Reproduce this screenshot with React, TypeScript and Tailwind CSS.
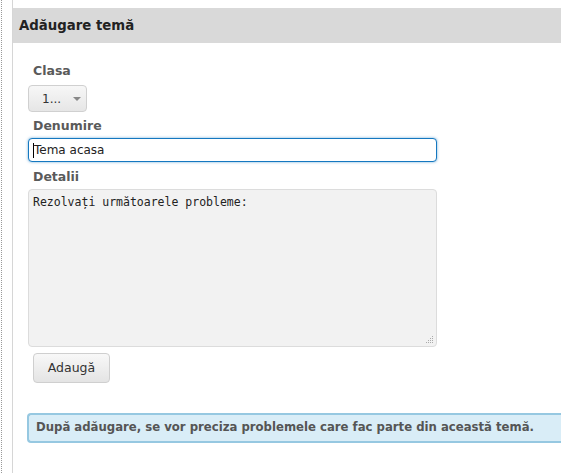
import React from "react";

export default function App() {
  return (
    <div
      className="w-[561px] h-[473px] bg-white flex overflow-hidden"
      style={{ fontFamily: '"DejaVu Sans", Verdana, sans-serif' }}
    >
      <div className="w-[3px] h-full border-l border-dotted border-[#999] ml-[1px]" />
      <div className="w-[8px]" />
      <div className="flex-1 border-l border-[#d6d6d6] min-w-0">
        <div className="mt-[8px] h-[35px] bg-[#d9d9d9] flex items-center pl-[6px] w-[600px]">
          <span className="text-[13.3px] font-bold text-[#222]">Adăugare temă</span>
        </div>
        <div className="pl-[15px] pt-[20px] flex flex-col">
          <label className="text-[12.5px] font-bold text-[#5a5a5a] pl-[5px] leading-[16px]">Clasa</label>
          <div className="mt-[6px] w-[59px] h-[27px] rounded-[4px] border border-[#d0d0d0] bg-gradient-to-b from-[#f7f7f7] to-[#e6e6e6] flex items-center pl-[13px] gap-[12px]">
            <span className="text-[12px] text-[#333]">1...</span>
            <span className="w-0 h-0 border-l-[4px] border-r-[4px] border-t-[4px] border-l-transparent border-r-transparent border-t-[#888]" />
          </div>
          <label className="mt-[6px] text-[12.5px] font-bold text-[#5a5a5a] pl-[5px] leading-[16px]">Denumire</label>
          <div className="mt-[4px] w-[409px] h-[24px] rounded-[4px] border border-[#1578c0] shadow-[0_0_3px_rgba(21,120,192,0.6)] bg-white flex items-center pl-[4px]">
            <span className="w-px h-[15px] bg-black" />
            <span className="text-[12px] text-[#222]">Tema acasa</span>
          </div>
          <label className="mt-[7px] text-[12.5px] font-bold text-[#5a5a5a] pl-[5px] leading-[16px]">Detalii</label>
          <div className="relative mt-[4px] w-[409px] h-[158px] rounded-[4px] border border-[#dcdcdc] bg-[#f2f2f2] pl-[4px] pt-[4px] leading-[14px]">
            <span
              className="text-[11.5px] text-[#222] leading-[14px]"
              style={{ fontFamily: '"DejaVu Sans Mono", monospace' }}
            >
              Rezolvați următoarele probleme:
            </span>
            <svg className="absolute right-[2px] bottom-[2px]" width="9" height="9" viewBox="0 0 9 9">
              <g fill="#aaa">
                <rect x="7" y="1" width="1" height="1" />
                <rect x="5" y="3" width="1" height="1" />
                <rect x="7" y="3" width="1" height="1" />
                <rect x="3" y="5" width="1" height="1" />
                <rect x="5" y="5" width="1" height="1" />
                <rect x="7" y="5" width="1" height="1" />
                <rect x="1" y="7" width="1" height="1" />
                <rect x="3" y="7" width="1" height="1" />
                <rect x="5" y="7" width="1" height="1" />
                <rect x="7" y="7" width="1" height="1" />
              </g>
            </svg>
          </div>
          <div className="mt-[6px] ml-[5px] w-[77px] h-[30px] rounded-[4px] border border-[#cfcfcf] bg-gradient-to-b from-[#f8f8f8] to-[#e4e4e4] flex items-center justify-center">
            <span className="text-[12.5px] text-[#333]">Adaugă</span>
          </div>
          <div className="mt-[30px] -ml-[1px] w-[560px] h-[30px] rounded-l-[4px] border-2 border-r-0 border-[#96c8e1] bg-[#d9edf7] flex items-center pl-[7px]">
            <span className="text-[11.7px] font-bold text-[#555]">
              După adăugare, se vor preciza problemele care fac parte din această temă.
            </span>
          </div>
        </div>
      </div>
    </div>
  );
}
